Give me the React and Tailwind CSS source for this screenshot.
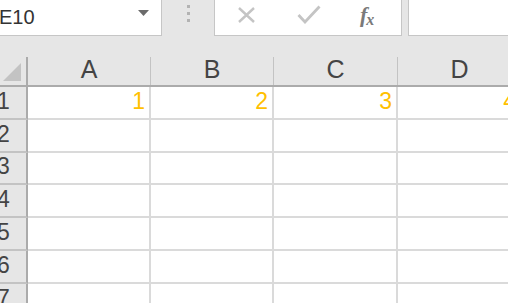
import React from "react";

const cols = [
  { label: "A", w: "w-[123px]", val: "1" },
  { label: "B", w: "w-[123px]", val: "2" },
  { label: "C", w: "w-[124px]", val: "3" },
  { label: "D", w: "w-[124px]", val: "4" },
];

const rows = [
  { n: "1", h: "h-[33px]" },
  { n: "2", h: "h-[33px]" },
  { n: "3", h: "h-[32px]" },
  { n: "4", h: "h-[33px]" },
  { n: "5", h: "h-[33px]" },
  { n: "6", h: "h-[33px]" },
  { n: "7", h: "h-[33px]" },
];

export default function App() {
  return (
    <div
      className="w-[508px] h-[303px] overflow-hidden bg-[#e6e6e6] flex flex-col"
      style={{ fontFamily: '"Liberation Sans", Arial, sans-serif' }}
    >
      {/* formula toolbar */}
      <div className="h-[36px] shrink-0 flex items-stretch">
        <div className="w-[162px] shrink-0 bg-white border-r border-b border-[#c6c6c6] flex items-center relative">
          <span className="text-[20px] leading-none text-[#333] ml-[-1px] mt-[-1px]">E10</span>
          <svg className="absolute left-[138px] top-[10px]" width="11" height="6" viewBox="0 0 11 6">
            <path d="M0 0 L11 0 L5.5 6 Z" fill="#6b6b6b" />
          </svg>
        </div>
        <div className="w-[52px] shrink-0 flex flex-col items-center pt-[5px] gap-[4px]">
          <div className="w-[3px] h-[3px] bg-[#b3b3b3]" />
          <div className="w-[3px] h-[3px] bg-[#b3b3b3]" />
          <div className="w-[3px] h-[3px] bg-[#b3b3b3]" />
        </div>
        <div className="w-[188px] shrink-0 bg-white border-r border-b border-l border-[#c6c6c6] relative">
          <svg className="absolute left-[22px] top-[7px]" width="19" height="16" viewBox="0 0 19 16">
            <path d="M2 1 L17 15 M17 1 L2 15" stroke="#c4c4c4" strokeWidth="2.4" fill="none" />
          </svg>
          <svg className="absolute left-[82px] top-[5px]" width="24" height="19" viewBox="0 0 24 19">
            <path d="M1.5 10 L8 17 L22.5 1.5" stroke="#c4c4c4" strokeWidth="2.8" fill="none" />
          </svg>
          <div
            className="absolute left-[145px] top-[4px] flex items-end text-[#7a7a7a] italic font-bold leading-none"
            style={{ fontFamily: '"Liberation Serif", "Times New Roman", serif' }}
          >
            <span className="text-[22px]">f</span>
            <span className="text-[16px] ml-[-1px] mb-[-2px]">x</span>
          </div>
        </div>
        <div className="w-[6px] shrink-0" />
        <div className="flex-1 bg-white border-l border-b border-[#c6c6c6]" />
      </div>

      <div className="h-[21px] shrink-0" />

      {/* column headers */}
      <div className="h-[30px] shrink-0 flex border-b-2 border-[#ababab]">
        <div className="w-[28px] shrink-0 border-r-2 border-[#ababab] relative">
          <svg className="absolute left-[3px] top-[6px]" width="18" height="18" viewBox="0 0 18 18">
            <path d="M18 0 L18 18 L0 18 Z" fill="#c3c3c3" />
          </svg>
        </div>
        {cols.map((c) => (
          <div
            key={c.label}
            className={`${c.w} shrink-0 border-r border-[#c3c3c3] flex items-end justify-center pb-[3px] text-[25px] leading-none text-[#444]`}
          >
            {c.label}
          </div>
        ))}
      </div>

      {/* rows */}
      {rows.map((r) => (
        <div key={r.n} className={`${r.h} shrink-0 flex`}>
          <div className="w-[28px] shrink-0 border-r-2 border-b-2 border-[#ababab] border-b-[#c3c3c3] flex items-end pb-[5px] text-[23px] leading-none text-[#444] overflow-hidden">
            <span className="ml-[-3px]">{r.n}</span>
          </div>
          {cols.map((c) => (
            <div
              key={c.label}
              className={`${c.w} shrink-0 bg-white border-r-2 border-b-2 border-[#dadada] flex items-end justify-end pr-[4px] pb-[5px] text-[23px] leading-none text-[#ffc000]`}
            >
              {r.n === "1" ? c.val : ""}
            </div>
          ))}
        </div>
      ))}
    </div>
  );
}
